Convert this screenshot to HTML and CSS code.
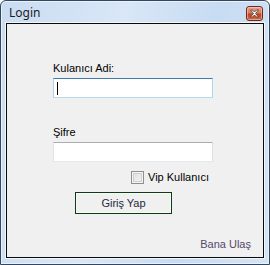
FILE: index.html
```html
<!DOCTYPE html>
<html lang="tr">
  <head>
    <meta charset="UTF-8" />
    <title>Login</title>
    <link rel="stylesheet" href="styles.css">
  </head>
  <body>
    <div class="window">
      <div class="titleBar">
        <span class="title">Login</span>
        <button class="closeBtn" aria-label="Kapat">
          <svg width="11" height="9" viewBox="0 0 11 9">
            <path d="M1.5 1 L3.5 1 L5.5 3 L7.5 1 L9.5 1 L6.5 4.5 L9.5 8 L7.5 8 L5.5 6 L3.5 8 L1.5 8 L4.5 4.5 Z"
              fill="#ffffff" stroke="#3b3b3b" stroke-width="0.8" stroke-linejoin="round" />
          </svg>
        </button>
      </div>

      <div class="client">
        <div class="form">
          <label class="fieldLabel" for="kullanici">Kulanıcı Adi:</label>
          <div class="textBox focused" id="kullanici"><span class="caret"></span></div>

          <label class="fieldLabel second" for="sifre">Şifre</label>
          <div class="textBox" id="sifre"></div>

          <div class="checkRow">
            <span class="checkBox"></span>
            <span class="checkText">Vip Kullanıcı</span>
          </div>

          <button class="loginBtn">Giriş Yap</button>
        </div>
        <div class="footer">
          <span class="contactLink">Bana Ulaş</span>
        </div>
      </div>
    </div>
  </body>
</html>
```

FILE: styles.css
```css
* {
  box-sizing: border-box;
}
body {
  margin: 0;
  background: #ffffff;
  font-family: "Liberation Sans", Arial, sans-serif;
  font-size: 11px;
  color: #000000;
}

.window {
  width: 270px;
  height: 265px;
  border: 1px solid #34475e;
  border-radius: 6px 6px 0 0;
  background: linear-gradient(100deg, #c9dcf2 0%, #d9e7f7 40%, #c7dbf2 70%, #d5e4f5 100%);
  display: flex;
  flex-direction: column;
  padding: 0 5px 6px 5px;
  box-shadow: inset 0 0 0 1px #e9f1fa;
}

.titleBar {
  height: 22px;
  display: flex;
  align-items: center;
  justify-content: space-between;
  padding-left: 3px;
}

.title {
  font-family: "Noto Sans", "Open Sans", sans-serif;
  font-size: 12px;
  color: #1b1b1b;
  margin-top: 1px;
}

.closeBtn {
  width: 17px;
  height: 15px;
  margin-right: 1px;
  margin-top: 2px;
  padding: 0;
  border: 1px solid #6d2a1c;
  border-radius: 3px;
  background: linear-gradient(#e9a492 0%, #d9775d 45%, #c2421f 55%, #d36844 100%);
  box-shadow: inset 0 0 0 1px rgba(255, 220, 210, 0.5);
  display: flex;
  align-items: center;
  justify-content: center;
}

.client {
  flex: 1;
  background: #f0f0f0;
  border: 1px solid #0a0a0a;
  box-shadow: 0 0 0 1px #f3f7fb;
  display: flex;
  flex-direction: column;
  justify-content: space-between;
}

.form {
  padding: 38px 0 0 46px;
  display: flex;
  flex-direction: column;
  align-items: flex-start;
}

.fieldLabel {
  line-height: 13px;
  height: 13px;
}

.fieldLabel.second {
  margin-top: 28px;
}

.textBox {
  margin-top: 3px;
  width: 160px;
  height: 20px;
  background: #ffffff;
  border: 1px solid #abadb3;
  border-top-color: #abadb3;
  border-bottom-color: #e3e9ef;
  border-left-color: #e2e3ea;
  border-right-color: #dbdfe6;
  padding: 3px 0 0 3px;
}

.textBox.focused {
  border-color: #3d7bad;
  border-left-color: #b5cfe7;
  border-right-color: #b7d5ea;
  border-bottom-color: #b7d9ed;
}

.caret {
  display: block;
  width: 1px;
  height: 13px;
  background: #000000;
}

.checkRow {
  margin: 8px 0 0 78px;
  display: flex;
  align-items: center;
  height: 14px;
}

.checkBox {
  width: 13px;
  height: 13px;
  border: 1px solid #8f8f8f;
  background: linear-gradient(135deg, #dcdcdc, #f6f6f6);
  box-shadow: inset 0 0 0 1px #f4f4f4, inset 0 0 0 2px #d0d0d0;
}

.checkText {
  margin-left: 4px;
  line-height: 13px;
}

.loginBtn {
  margin: 8px 0 0 22px;
  width: 97px;
  height: 22px;
  background: #f0f0f0;
  border: 1px solid #0f3b12;
  box-shadow: inset 0 0 0 1px #f8f8f8;
  font-family: "Liberation Sans", Arial, sans-serif;
  font-size: 11px;
  color: #1c2a3c;
  padding: 0;
}

.footer {
  display: flex;
  justify-content: flex-end;
  padding: 0 12px 6px 0;
}

.contactLink {
  color: #55486a;
  line-height: 13px;
}
```
